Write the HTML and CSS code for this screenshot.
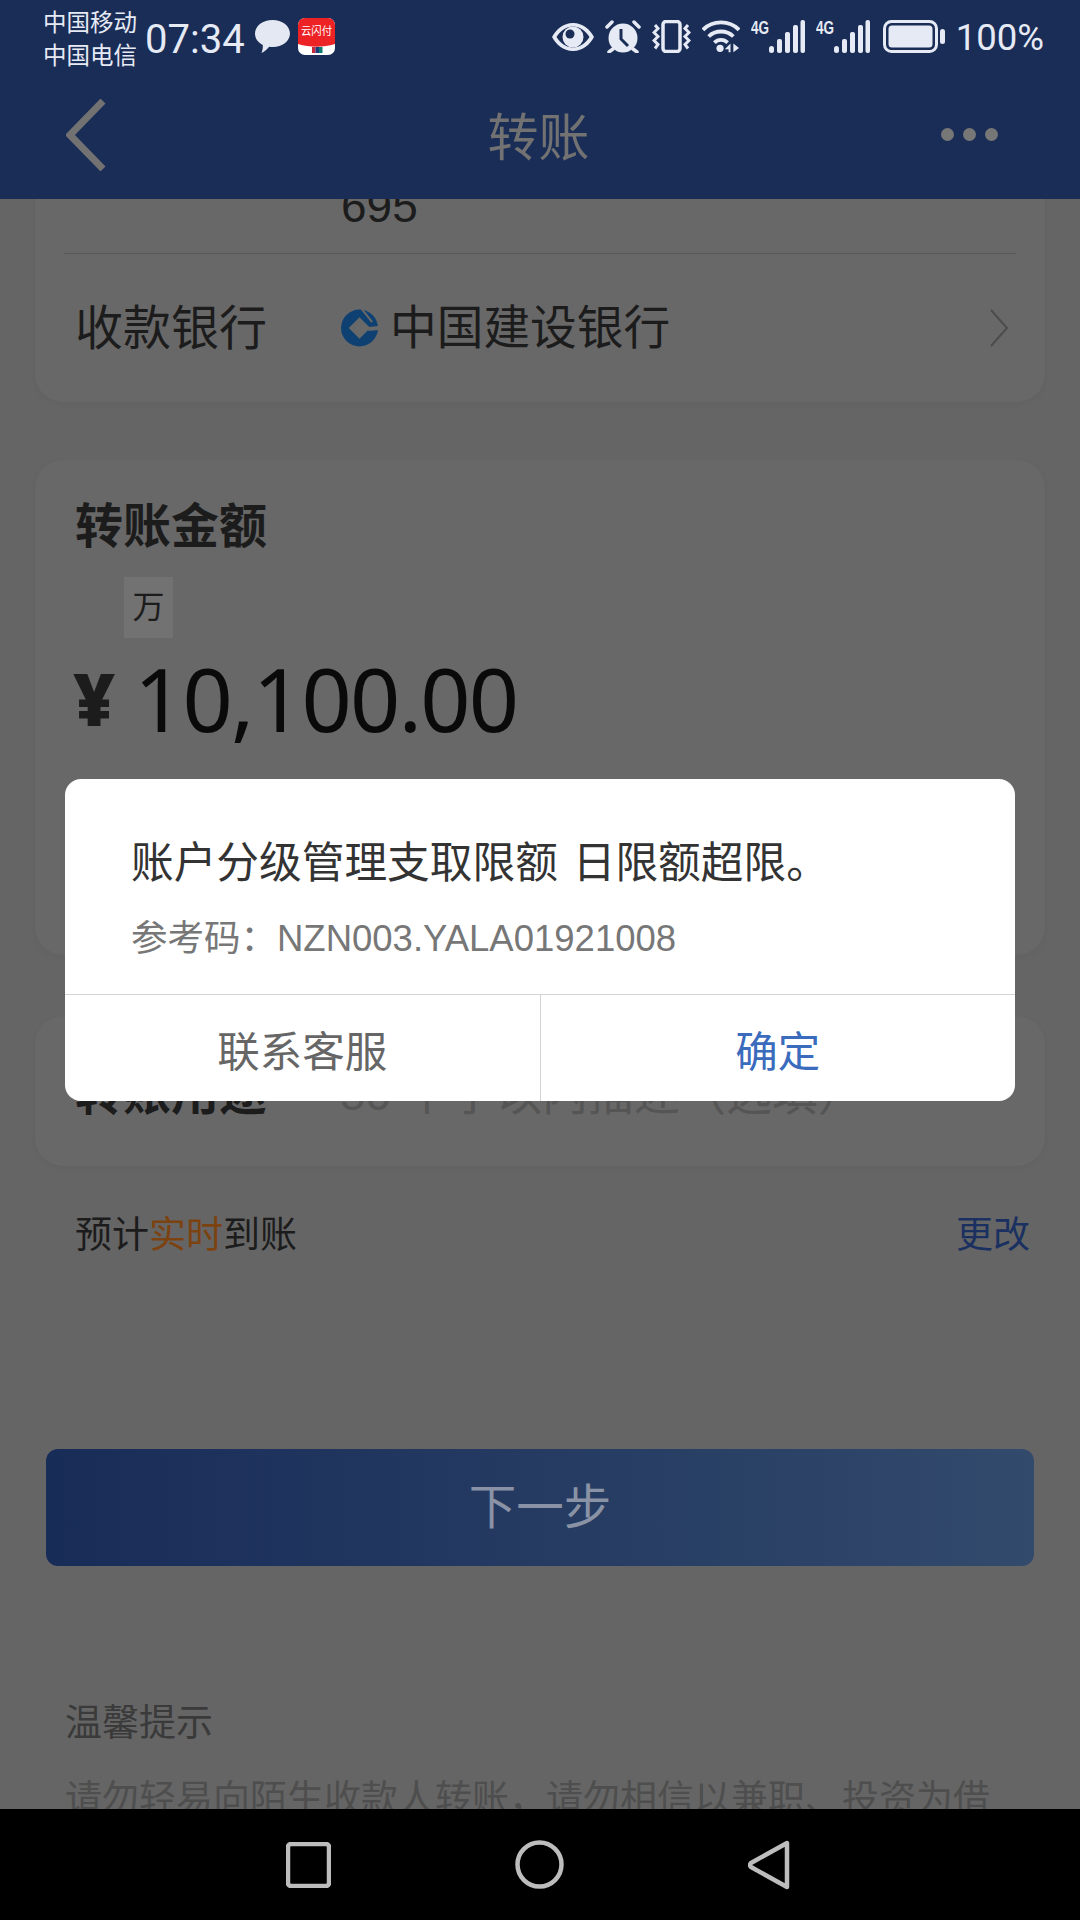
FILE: index.html
```html
<!DOCTYPE html>
<html lang="zh-CN">
<head>
    <meta charset="UTF-8">
    <meta name="viewport" content="width=device-width, initial-scale=1.0">
    <title>转账</title>
    <link rel="stylesheet" href="styles.css">
</head>
<body>
    <div id="phone">
        <div id="top">
            <div id="statusBar">
                <div class="carriers"><p>中国移动</p><p>中国电信</p></div>
                <span class="clock">07:34</span>
                <svg class="chatIcon" viewBox="0 0 35 33"><path d="M17.500 0C27 0 35 5.800 35 13.500S27 27 18 27c-1.500 0-2.600 0-3.800-.3C12 29.500 9 32 6.500 33c1-2.500 1.500-5 1.300-8C3 22.500 0 18.500 0 13.500 0 5.800 8 0 17.500 0z" fill="#e4e8f2"/></svg>
                <svg class="appIcon" viewBox="0 0 37 37">
                    <rect width="37" height="37" rx="7" fill="#fff"/>
                    <path d="M7 0h23a7 7 0 0 1 7 7v19c-12 3.500-25 3.500-37 0V7a7 7 0 0 1 7-7z" fill="#ec2224"/>
                    <text x="18.500" y="17" class="appText" textLength="31" lengthAdjust="spacingAndGlyphs">云闪付</text>
                    <rect x="14" y="29" width="3.500" height="6" fill="#c8263a"/>
                    <rect x="17.500" y="29" width="3.500" height="6" fill="#1c3d7a"/>
                    <rect x="21" y="29" width="3.500" height="6" fill="#0f7a70"/>
                </svg>
                <div class="statusRight">
                    <svg class="eye" viewBox="0 0 42 28">
                        <path d="M21 0C31 0 38 6.500 42 14 38 21.500 31 28 21 28S4 21.500 0 14C4 6.500 11 0 21 0zM21 3.500C14 3.500 8.500 8 4.500 14c4 6 9.500 10.500 16.500 10.500S33.500 20 37.500 14C33.500 8 28 3.500 21 3.500z" fill="#e6eaf5"/>
                        <circle cx="21" cy="14" r="10.500" fill="#e6eaf5"/>
                        <circle cx="18" cy="11" r="4.500" fill="#1a2d57"/>
                    </svg>
                    <svg class="alarm" viewBox="0 0 36 33">
                        <circle cx="18" cy="18" r="14.500" fill="#e6eaf5"/>
                        <path d="M16 9v10l7 7" fill="none" stroke="#1a2d57" stroke-width="3"/>
                        <path d="M2 7l5-5M34 7l-5-5M4 32l4-3M32 32l-4-3" fill="none" stroke="#e6eaf5" stroke-width="3.500" stroke-linecap="round"/>
                    </svg>
                    <svg class="vibrate" viewBox="0 0 39 33">
                        <rect x="11" y="1.500" width="17" height="30" rx="3" fill="none" stroke="#e6eaf5" stroke-width="3.500"/>
                        <path d="M3 5l3 3.500-4 4 4 4-4 4 4 4-3 4M36 5l-3 3.500 4 4-4 4 4 4-4 4 3 4" fill="none" stroke="#e6eaf5" stroke-width="3"/>
                    </svg>
                    <svg class="wifi" viewBox="0 0 40 34">
                        <path d="M1 10.500C11 0 29 0 39 10.500M7 17.500c7-7 19-7 26 0M13 24c4-4 10-4 14 0" fill="none" stroke="#e6eaf5" stroke-width="4"/>
                        <circle cx="19" cy="30" r="3.800" fill="#e6eaf5"/>
                        <path d="M30 25v9h-2v-3h-4zM33 25l6 4.500-6 4.500z" fill="#e6eaf5"/>
                    </svg>
                    <svg class="signal" viewBox="0 -3 54 37">
                        <text x="0" y="15" class="netText" textLength="18" lengthAdjust="spacingAndGlyphs">4G</text>
                        <rect x="18" y="27" width="5" height="7" rx="2.500" fill="#e6eaf5"/>
                        <rect x="26" y="20" width="5" height="14" rx="2" fill="#e6eaf5"/>
                        <rect x="34" y="13" width="5" height="21" rx="2" fill="#e6eaf5"/>
                        <rect x="42" y="6" width="5" height="28" rx="2" fill="#e6eaf5"/>
                        <rect x="49.500" y="1" width="4.500" height="33" rx="2" fill="#e6eaf5"/>
                    </svg>
                    <svg class="signal" viewBox="0 -3 54 37">
                        <text x="0" y="15" class="netText" textLength="18" lengthAdjust="spacingAndGlyphs">4G</text>
                        <rect x="18" y="27" width="5" height="7" rx="2.500" fill="#e6eaf5"/>
                        <rect x="26" y="20" width="5" height="14" rx="2" fill="#e6eaf5"/>
                        <rect x="34" y="13" width="5" height="21" rx="2" fill="#e6eaf5"/>
                        <rect x="42" y="6" width="5" height="28" rx="2" fill="#e6eaf5"/>
                        <rect x="49.500" y="1" width="4.500" height="33" rx="2" fill="#e6eaf5"/>
                    </svg>
                    <svg class="battery" viewBox="0 0 62 33">
                        <rect x="1.500" y="1.500" width="52" height="30" rx="7" fill="none" stroke="#e6eaf5" stroke-width="3"/>
                        <rect x="5.500" y="5.500" width="44" height="22" rx="3.500" fill="#e6eaf5"/>
                        <rect x="57" y="9" width="5" height="15" rx="2.500" fill="#e6eaf5"/>
                    </svg>
                    <span class="percent">100%</span>
                </div>
            </div>
            <div id="titleBar">
                <div class="titleSide">
                    <svg class="backIcon" viewBox="0 0 40 72"><path d="M37 2L4 36l33 34" fill="none" stroke="#727272" stroke-width="7"/></svg>
                </div>
                <span class="pageTitle">转账</span>
                <div class="titleSide moreDots"><i></i><i></i><i></i></div>
            </div>
        </div>

        <div id="content">
            <div class="card cardBank">
                <div class="accountRow"><span class="accountNo">695</span></div>
                <div class="bankRow">
                    <span class="label">收款银行</span>
                    <svg class="bankLogo" viewBox="0 0 38 40">
                        <circle cx="19" cy="20" r="19" fill="#0f4072"/>
                        <path d="M19 9l11 11-11 11-11-11z" fill="#696969"/>
                        <path d="M21 0L32 14" fill="none" stroke="#696969" stroke-width="2"/>
                        <path d="M28 19l10-1v4l-10 1z" fill="#696969"/>
                    </svg>
                    <span class="bankName">中国建设银行</span>
                    <svg class="chevron" viewBox="0 0 20 38"><path d="M2 1l16 18L2 37" fill="none" stroke="#4c4c4c" stroke-width="2"/></svg>
                </div>
            </div>

            <div class="card cardAmount">
                <div class="label labelBold">转账金额</div>
                <div class="unitBox">万</div>
                <div class="amountRow">
                    <span class="yen">¥</span>
                    <span class="amount">10,100.00</span>
                </div>
            </div>

            <div class="card cardPurpose">
                <span class="label labelBold">转账用途</span>
                <span class="purposeHint">50 个字以内描述（选填）</span>
            </div>

            <div class="arriveRow">
                <span>预计<em>实时</em>到账</span>
                <span class="changeLink">更改</span>
            </div>

            <div class="nextBtn">下一步</div>

            <p class="tipsTitle">温馨提示</p>
            <p class="tipsText">请勿轻易向陌生收款人转账，请勿相信以兼职、投资为借</p>

            <div id="dialog">
                <div class="dialogBody">
                    <p class="dialogMsg">账户分级管理支取限额 日限额超限。</p>
                    <p class="dialogCode">参考码：NZN003.YALA01921008</p>
                </div>
                <div class="dialogBtns">
                    <div class="dialogBtn">联系客服</div>
                    <div class="dialogBtn btnOk">确定</div>
                </div>
            </div>
        </div>

        <div id="navBar">
            <svg class="navSquare" viewBox="0 0 45 46"><rect x="2" y="2" width="41" height="42" rx="3" fill="none" stroke="#bdbdbd" stroke-width="4.500"/></svg>
            <svg class="navCircle" viewBox="0 0 49 49"><circle cx="24.500" cy="24.500" r="22" fill="none" stroke="#bdbdbd" stroke-width="4.500"/></svg>
            <svg class="navBack" viewBox="0 0 42 50"><path d="M39 3v44L3 27a3 3 0 0 1 0-4z" fill="none" stroke="#bdbdbd" stroke-width="4.500" stroke-linejoin="round"/></svg>
        </div>
    </div>
</body>
</html>
```
FILE: styles.css
```css
*{
    box-sizing: border-box;
}
html, body{
    margin: 0;
    padding: 0;
}
body{
    font-family: "Liberation Sans", "Noto Sans CJK SC", sans-serif;
    background-color: #656565;
}
p{
    margin: 0;
}
#phone{
    width: 1080px;
    height: 1920px;
    display: flex;
    flex-direction: column;
    overflow: hidden;
}

/* status bar + title */
#top{
    height: 199px;
    background-color: #1a2d57;
    flex-shrink: 0;
}
#statusBar{
    height: 70px;
    display: flex;
    align-items: flex-start;
    padding-left: 43px;
    padding-right: 36px;
    color: #e6eaf5;
}
.carriers{
    width: 102px;
    padding-top: 7px;
    font-size: 23.500px;
    line-height: 33px;
}
.clock{
    font-family: Roboto, sans-serif;
    font-size: 40px;
    line-height: 40px;
    margin-top: 20px;
    width: 110px;
}
.chatIcon{
    width: 35px;
    height: 33px;
    margin-top: 20px;
}
.appIcon{
    width: 37px;
    height: 37px;
    margin-top: 18px;
    margin-left: 8px;
}
.appText{
    font-size: 11px;
    fill: #fff;
    text-anchor: middle;
}
.statusRight{
    margin-left: auto;
    display: flex;
    align-items: flex-start;
    gap: 11px;
}
.eye{
    width: 42px;
    height: 28px;
    margin-top: 23px;
}
.alarm{
    width: 36px;
    height: 33px;
    margin-top: 20px;
}
.vibrate{
    width: 39px;
    height: 33px;
    margin-top: 20px;
}
.wifi{
    width: 38px;
    height: 34px;
    margin-top: 19px;
}
.signal{
    width: 54px;
    height: 37px;
    margin-top: 16px;
}
.netText{
    font-family: "Liberation Sans", sans-serif;
    font-weight: bold;
    font-size: 19px;
    fill: #e6eaf5;
}
.battery{
    width: 62px;
    height: 33px;
    margin-top: 20px;
    margin-left: 2px;
}
.percent{
    font-family: Roboto, sans-serif;
    font-size: 36.500px;
    line-height: 40px;
    margin-top: 18px;
}
#titleBar{
    height: 129px;
    display: flex;
    align-items: center;
    padding: 0 82px 0 66px;
}
.titleSide{
    flex: 1;
}
.backIcon{
    display: block;
    width: 40px;
    height: 72px;
}
.pageTitle{
    font-size: 51px;
    line-height: 60px;
    padding-left: 13px;
    padding-top: 8px;
    color: #727272;
}
.moreDots{
    display: flex;
    justify-content: flex-end;
    gap: 9px;
}
.moreDots i{
    width: 13px;
    height: 13px;
    border-radius: 50%;
    background-color: #777;
}

/* page under the dialog */
#content{
    flex: 1;
    position: relative;
    overflow: hidden;
}
.card{
    margin: 0 35px;
    background-color: #686868;
    border-radius: 28px;
    box-shadow: rgba(0, 0, 0, 0.04) 0px 2px 6px;
}
.label{
    font-size: 48px;
    line-height: 48px;
    color: #1c1c1c;
    width: 265px;
    flex-shrink: 0;
    margin-left: -1px;
}
.labelBold{
    font-weight: bold;
}
.cardBank{
    margin-top: -60px;
    height: 263px;
    padding: 0 29px;
}
.accountRow{
    height: 115px;
    border-bottom: 1px solid #585858;
    padding-left: 277px;
    display: flex;
    align-items: flex-end;
    padding-bottom: 24px;
}
.accountNo{
    font-size: 46px;
    line-height: 46px;
    color: #1c1c1c;
}
.bankRow{
    height: 147px;
    display: flex;
    align-items: center;
    padding-left: 12px;
    padding-right: 7px;
}
.bankRow .label{
    margin-top: 2px;
}
.bankLogo{
    width: 37px;
    height: 40px;
    margin-left: 1px;
}
.bankName{
    font-size: 46.700px;
    line-height: 47px;
    margin-top: 2px;
    color: #1c1c1c;
    margin-left: 12px;
}
.chevron{
    width: 20px;
    height: 38px;
    margin-left: auto;
}
.cardAmount{
    margin-top: 58px;
    height: 495px;
    padding: 43px 41px 0;
}
.unitBox{
    width: 49px;
    height: 61px;
    margin-left: 48px;
    margin-top: 26px;
    background-color: #727272;
    font-size: 32px;
    line-height: 61px;
    text-align: center;
    color: #1c1c1c;
}
.amountRow{
    height: 126px;
    padding-bottom: 6px;
    display: flex;
    align-items: center;
}
.yen{
    font-family: "Noto Sans", sans-serif;
    font-weight: 900;
    font-size: 72px;
    color: #1c1c1c;
    margin-left: -3px;
    width: 61px;
}
.amount{
    font-family: "Noto Sans", sans-serif;
    font-size: 88px;
    letter-spacing: -1.800px;
    color: #0a0a0a;
}
.cardPurpose{
    margin-top: 61px;
    height: 150px;
    padding: 54px 41px 0;
    display: flex;
    align-items: flex-start;
}
.purposeHint{
    font-size: 46px;
    line-height: 48px;
    color: #555;
}
.arriveRow{
    margin-top: 51px;
    padding: 0 50px 0 75px;
    display: flex;
    justify-content: space-between;
    font-size: 37px;
    line-height: 38px;
    color: #1c1c1c;
}
.arriveRow em{
    font-style: normal;
    color: #7c4210;
}
.changeLink{
    color: #1a3060;
}
.nextBtn{
    margin: 194px 46px 0;
    height: 117px;
    border-radius: 12px;
    background: linear-gradient(90deg, #182c58, #324a6c);
    color: #8a93a5;
    font-size: 47.500px;
    line-height: 117px;
    text-align: center;
}
.tipsTitle{
    margin-top: 139px;
    padding-left: 65px;
    font-size: 37px;
    line-height: 37px;
    color: #3a3a3a;
}
.tipsText{
    margin-top: 39px;
    padding-left: 65px;
    font-size: 37px;
    line-height: 37px;
    color: #4e4e4e;
    white-space: nowrap;
}

/* dialog */
#dialog{
    position: absolute;
    left: 65px;
    top: 580px;
    width: 950px;
    height: 322px;
    background-color: #fff;
    border-radius: 16px;
    display: flex;
    flex-direction: column;
}
.dialogBody{
    height: 216px;
    padding: 61px 66px 0;
    border-bottom: 1px solid #d4d4d4;
}
.dialogMsg{
    font-size: 42.700px;
    line-height: 46px;
    word-spacing: 3px;
    color: #333;
}
.dialogCode{
    margin-top: 32px;
    font-size: 36.500px;
    line-height: 42px;
    color: #777;
}
.dialogBtns{
    flex: 1;
    display: flex;
}
.dialogBtn{
    flex: 1;
    padding-top: 10px;
    font-size: 42.500px;
    line-height: 96px;
    text-align: center;
    color: #666;
}
.btnOk{
    border-left: 1px solid #d4d4d4;
    color: #3a6bbd;
}

/* android nav */
#navBar{
    height: 111px;
    background-color: #000;
    flex-shrink: 0;
    display: flex;
    align-items: center;
    justify-content: center;
    gap: 184px;
    padding-right: 5px;
}
.navSquare{
    width: 45px;
    height: 46px;
}
.navCircle{
    width: 49px;
    height: 49px;
}
.navBack{
    width: 42px;
    height: 50px;
}
```
